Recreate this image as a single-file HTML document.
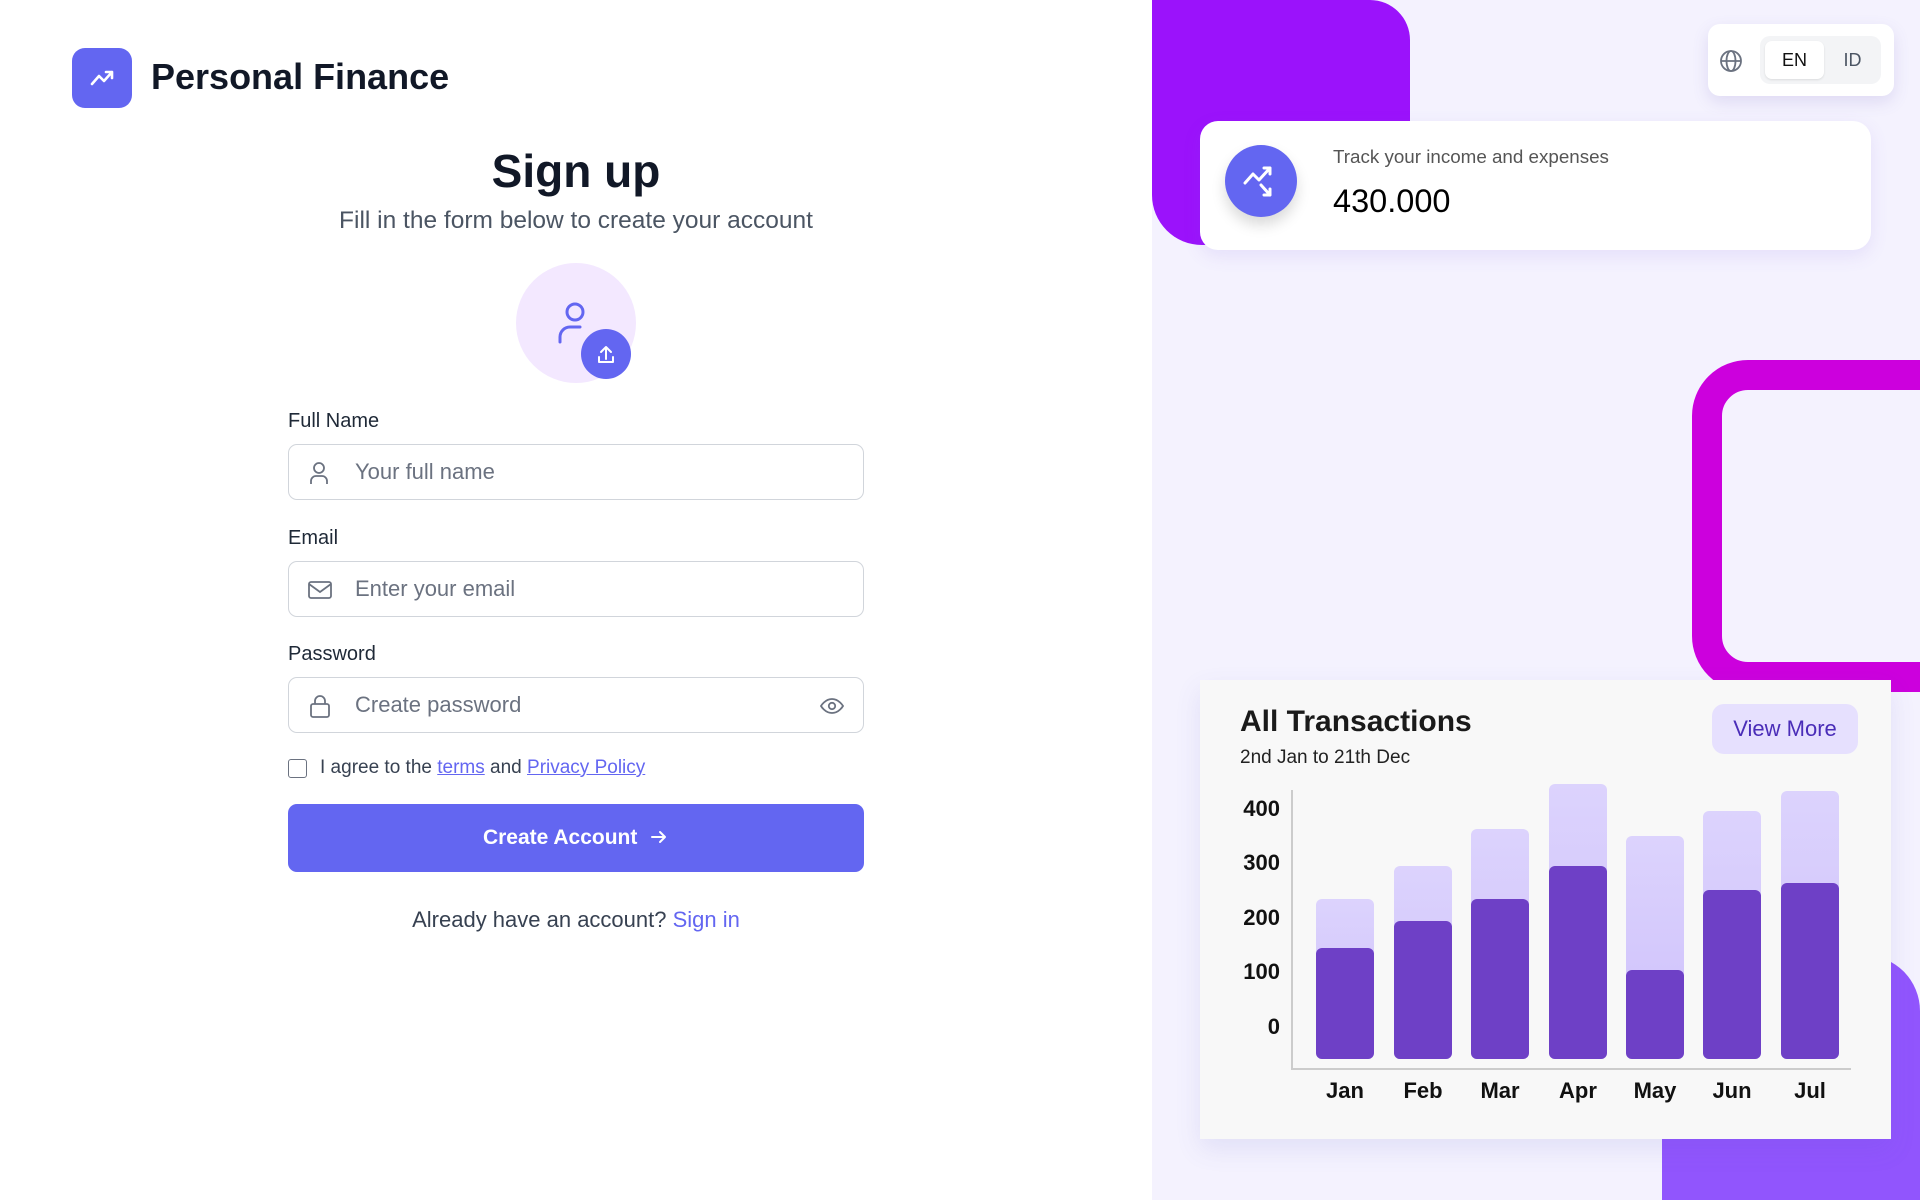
<!DOCTYPE html>
<html><head><meta charset="utf-8"><style>
*{box-sizing:border-box;margin:0;padding:0}
html,body{width:1920px;height:1200px;overflow:hidden}
body{position:relative;font-family:"Liberation Sans",sans-serif;background:#fff}
.a{position:absolute}
.lbl{position:absolute;left:288px;font-size:20px;color:#1f2937}
.inp{position:absolute;left:288px;width:576px;height:56px;border:1.5px solid #d1d5db;border-radius:9px;background:#fff}
.inp span{position:absolute;left:66px;top:14px;font-size:22px;color:#6b7280}
.inp svg{position:absolute;left:18px;top:15px}
.bar{position:absolute;width:58px;border-radius:6px}
.lt{background:linear-gradient(#dcd3fd,#cdbffb)}
.dk{background:#6e40c6}
.yl{position:absolute;width:60px;text-align:right;left:1220px;font-size:22px;font-weight:bold;color:#111}
.ml{position:absolute;top:1078px;width:80px;text-align:center;font-size:22px;font-weight:bold;color:#111}
</style></head><body>
<div class="a" style="left:72px;top:48px;width:60px;height:60px;border-radius:13px;background:#6366f1">
<svg width="60" height="60" viewBox="0 0 60 60"><path d="M20 36l7-8 5 5 8-9M34 24h6v6" fill="none" stroke="#fff" stroke-width="2.6" stroke-linecap="round" stroke-linejoin="round"/></svg></div>
<div class="a" style="left:151px;top:56px;font-size:36px;font-weight:bold;color:#111827">Personal Finance</div>
<div class="a" style="left:0;width:1152px;text-align:center;top:144px;font-size:46px;font-weight:bold;color:#111827">Sign up</div>
<div class="a" style="left:0;width:1152px;text-align:center;top:207px;font-size:24.5px;color:#4b5563">Fill in the form below to create your account</div>
<div class="a" style="left:516px;top:263px;width:120px;height:120px;border-radius:50%;background:#f3e8ff"></div>
<svg class="a" style="left:550px;top:297px" width="40" height="50" viewBox="0 0 40 50"><circle cx="25" cy="15" r="8" fill="none" stroke="#6366f1" stroke-width="3"/><path d="M10 45v-5a10 10 0 0 1 10-10h10" fill="none" stroke="#6366f1" stroke-width="3" stroke-linecap="round"/></svg>
<div class="a" style="left:581px;top:329px;width:50px;height:50px;border-radius:50%;background:#6366f1">
<svg width="50" height="50" viewBox="0 0 50 50"><path d="M25 30V19M20 23l5-5 5 5M18 28v5h14v-5" fill="none" stroke="#fff" stroke-width="2" stroke-linecap="round" stroke-linejoin="round"/></svg></div>

<div class="lbl" style="top:410px">Full Name</div>
<div class="inp" style="top:444px"><svg width="24" height="26" viewBox="0 0 24 26"><circle cx="12" cy="8" r="5" fill="none" stroke="#6b7280" stroke-width="1.8"/><path d="M4 24v-3a5 5 0 0 1 5-5h6a5 5 0 0 1 5 5v3" fill="none" stroke="#6b7280" stroke-width="1.8"/></svg><span>Your full name</span></div>
<div class="lbl" style="top:527px">Email</div>
<div class="inp" style="top:561px"><svg width="26" height="26" viewBox="0 0 26 26"><rect x="2" y="5" width="22" height="16" rx="2" fill="none" stroke="#6b7280" stroke-width="1.8"/><path d="M2 7l11 8 11-8" fill="none" stroke="#6b7280" stroke-width="1.8"/></svg><span>Enter your email</span></div>
<div class="lbl" style="top:643px">Password</div>
<div class="inp" style="top:677px"><svg width="26" height="26" viewBox="0 0 26 26"><rect x="4" y="11" width="18" height="13" rx="2" fill="none" stroke="#6b7280" stroke-width="1.8"/><path d="M8 11V8a5 5 0 0 1 10 0v3" fill="none" stroke="#6b7280" stroke-width="1.8"/></svg><span>Create password</span>
<svg style="left:530px;top:15px" width="26" height="26" viewBox="0 0 26 26"><path d="M2 13s4-7 11-7 11 7 11 7-4 7-11 7S2 13 2 13z" fill="none" stroke="#6b7280" stroke-width="1.8"/><circle cx="13" cy="13" r="3.2" fill="none" stroke="#6b7280" stroke-width="1.8"/></svg></div>
<div class="a" style="left:288px;top:759px;width:19px;height:19px;border:1.5px solid #6b7280;border-radius:3px"></div>
<div class="a" style="left:320px;top:757px;font-size:19px;color:#374151">I agree to the <span style="color:#6366f1;text-decoration:underline">terms</span> and <span style="color:#6366f1;text-decoration:underline">Privacy Policy</span></div>
<div class="a" style="left:288px;top:804px;width:576px;height:68px;border-radius:9px;background:#6366f1;color:#fff;font-size:21px;font-weight:bold;text-align:center;line-height:68px">Create Account &nbsp;<svg width="20" height="20" viewBox="0 0 20 20" style="vertical-align:-3px"><path d="M3 10h13M11 5l5 5-5 5" fill="none" stroke="#fff" stroke-width="2" stroke-linecap="round" stroke-linejoin="round"/></svg></div>
<div class="a" style="left:0;width:1152px;text-align:center;top:907px;font-size:22px;color:#374151">Already have an account? <span style="color:#6366f1">Sign in</span></div>

<div class="a" style="left:1152px;top:0;width:768px;height:1200px;background:#f4f2fe;overflow:hidden">
 <div class="a" style="left:0;top:0;width:258px;height:245px;border-radius:0 40px 50px 50px;background:#9b12fb"></div>
 <div class="a" style="left:540px;top:360px;width:300px;height:332px;border:30px solid #cc00dd;border-radius:56px"></div>
 <div class="a" style="left:510px;top:955px;width:258px;height:245px;border-radius:56px 56px 0 0;background:#9155fd"></div>
 <div class="a" style="left:556px;top:24px;width:186px;height:72px;background:#fff;border-radius:12px;box-shadow:0 6px 16px rgba(100,80,180,.15)">
  <svg class="a" style="left:10px;top:24px" width="26" height="26" viewBox="0 0 26 26"><circle cx="13" cy="13" r="10" fill="none" stroke="#6b7280" stroke-width="1.8"/><ellipse cx="13" cy="13" rx="4.5" ry="10" fill="none" stroke="#6b7280" stroke-width="1.8"/><path d="M3 13h20" stroke="#6b7280" stroke-width="1.8"/></svg>
  <div class="a" style="left:52px;top:12px;width:121px;height:48px;border-radius:10px;background:#f3f4f6"></div>
  <div class="a" style="left:57px;top:17px;width:59px;height:38px;border-radius:7px;background:#fff;box-shadow:0 1px 2px rgba(0,0,0,.1);text-align:center;line-height:38px;font-size:18px;color:#111">EN</div>
  <div class="a" style="left:116px;top:17px;width:57px;text-align:center;line-height:38px;font-size:18px;color:#4b5563">ID</div>
 </div>
 <div class="a" style="left:48px;top:121px;width:671px;height:129px;background:#fff;border-radius:18px;box-shadow:0 6px 18px rgba(120,90,220,.12)">
  <div class="a" style="left:25px;top:24px;width:72px;height:72px;border-radius:50%;background:#6366f1;box-shadow:0 8px 14px rgba(0,0,0,.15)">
   <svg width="72" height="72" viewBox="0 0 72 72"><path d="M20 38l8-9 6 6 11-12M39 23h6v6M36 40l9 10M45 44v6h-6" fill="none" stroke="#fff" stroke-width="3" stroke-linecap="round" stroke-linejoin="round"/></svg></div>
  <div class="a" style="left:133px;top:25px;font-size:18.8px;color:#555">Track your income and expenses</div>
  <div class="a" style="left:133px;top:62px;font-size:32.5px;color:#000">430.000</div>
 </div>
 <div class="a" style="left:48px;top:680px;width:691px;height:459px;background:#f8f8f8;box-shadow:0 10px 24px rgba(90,90,200,.12)"></div>
</div>
<div class="a" style="left:1240px;top:705px;font-size:30px;font-weight:bold;color:#1a1a1a">All Transactions</div>
<div class="a" style="left:1240px;top:747px;font-size:19px;color:#222">2nd Jan to 21th Dec</div>
<div class="a" style="left:1712px;top:704px;width:146px;height:50px;border-radius:12px;background:#e6e0fe;color:#4a2db8;font-size:22px;text-align:center;line-height:50px">View More</div>
<div class="yl" style="top:796px">400</div><div class="yl" style="top:850px">300</div><div class="yl" style="top:905px">200</div><div class="yl" style="top:959px">100</div><div class="yl" style="top:1014px">0</div>
<div class="a" style="left:1291px;top:790px;width:2px;height:280px;background:#ccc"></div>
<div class="a" style="left:1291px;top:1068px;width:560px;height:2px;background:#ccc"></div>
<div class="bar lt" style="left:1316px;top:899px;height:160px"></div><div class="bar dk" style="left:1316px;top:948px;height:111px"></div>
<div class="bar lt" style="left:1394px;top:866px;height:193px"></div><div class="bar dk" style="left:1394px;top:921px;height:138px"></div>
<div class="bar lt" style="left:1471px;top:829px;height:230px"></div><div class="bar dk" style="left:1471px;top:899px;height:160px"></div>
<div class="bar lt" style="left:1549px;top:784px;height:275px"></div><div class="bar dk" style="left:1549px;top:866px;height:193px"></div>
<div class="bar lt" style="left:1626px;top:836px;height:223px"></div><div class="bar dk" style="left:1626px;top:970px;height:89px"></div>
<div class="bar lt" style="left:1703px;top:811px;height:248px"></div><div class="bar dk" style="left:1703px;top:890px;height:169px"></div>
<div class="bar lt" style="left:1781px;top:791px;height:268px"></div><div class="bar dk" style="left:1781px;top:883px;height:176px"></div>
<div class="ml" style="left:1305px">Jan</div><div class="ml" style="left:1383px">Feb</div><div class="ml" style="left:1460px">Mar</div><div class="ml" style="left:1538px">Apr</div><div class="ml" style="left:1615px">May</div><div class="ml" style="left:1692px">Jun</div><div class="ml" style="left:1770px">Jul</div>
</body></html>
